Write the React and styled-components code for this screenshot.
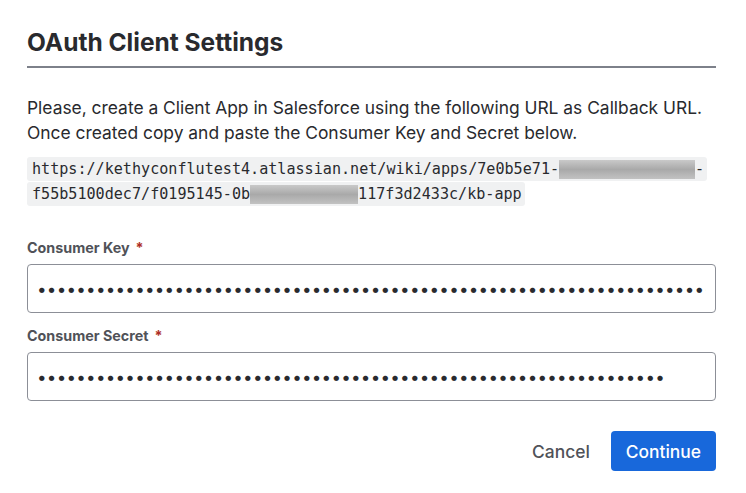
import styled, { createGlobalStyle } from "styled-components";

const GlobalStyle = createGlobalStyle`
  html, body {
    margin: 0;
    background: #ffffff;
  }
  body {
    font-family: Inter, "Noto Sans", sans-serif;
    color: #292a2e;
  }
`;

const Modal = styled.section`
  width: 689px;
  padding: 26px 30px 22px 27px;
  display: flex;
  flex-direction: column;
`;

const Title = styled.h1`
  margin: 0;
  padding-bottom: 8px;
  font-size: 24.5px;
  line-height: 32px;
  font-weight: 700;
  color: #292a2e;
  border-bottom: 2px solid #7d818a;
`;

const Body = styled.div`
  padding-top: 27px;
  display: flex;
  flex-direction: column;
`;

const Intro = styled.p`
  margin: 0;
  font-size: 17.4px;
  line-height: 25px;
  color: #292a2e;
`;

const CodeBlock = styled.div`
  margin-top: 12px;
  display: flex;
  flex-direction: column;
  align-items: flex-start;
  gap: 1px;
`;

const CodeLine = styled.code`
  display: flex;
  align-items: center;
  height: 24px;
  padding: 0 3px 0 5px;
  background: #f0f1f2;
  border-radius: 3px;
  font-family: "DejaVu Sans Mono", "Liberation Mono", monospace;
  font-size: 15.1px;
  color: #292a2e;
  white-space: pre;
`;

const Redacted = styled.span`
  display: inline-block;
  width: ${({ $w }) => $w}px;
  height: 19px;
  background: linear-gradient(180deg, #c9c9c9 0%, #a9a9a9 50%, #c2c2c2 100%);
`;

const Field = styled.div`
  display: flex;
  flex-direction: column;
  margin-top: ${({ $top }) => $top}px;
`;

const Label = styled.label`
  font-size: 14.3px;
  line-height: 20px;
  font-weight: 650;
  color: #505258;
  margin-bottom: 6px;
`;

const Required = styled.span`
  color: #ae2e24;
  margin-left: 6px;
`;

const Input = styled.input`
  box-sizing: border-box;
  width: 100%;
  height: 49px;
  padding: 0 9px;
  border: 1px solid #8c8f97;
  border-radius: 4px;
  background: #ffffff;
  font-family: Inter, sans-serif;
  font-size: 17px;
  letter-spacing: 0.25px;
  color: #292a2e;
  outline: none;
`;

const Actions = styled.div`
  margin-top: 30px;
  display: flex;
  justify-content: flex-end;
  align-items: center;
  gap: 6px;
`;

const Button = styled.button`
  height: 40px;
  padding: 0 15px;
  border: none;
  border-radius: 4px;
  font-family: Inter, sans-serif;
  font-size: 17.4px;
  font-weight: 500;
  background: ${({ $primary }) => ($primary ? "#1868db" : "transparent")};
  color: ${({ $primary }) => ($primary ? "#ffffff" : "#505258")};
  cursor: pointer;
`;

const keyValue = "x".repeat(90);
const secretValue = "x".repeat(64);

export default function App() {
  return (
    <>
      <GlobalStyle />
      <Modal>
        <Title>OAuth Client Settings</Title>
        <Body>
          <Intro>
            Please, create a Client App in Salesforce using the following URL as Callback URL.
            <br />
            Once created copy and paste the Consumer Key and Secret below.
          </Intro>
          <CodeBlock>
            <CodeLine>
              https://kethyconflutest4.atlassian.net/wiki/apps/7e0b5e71-
              <Redacted $w={136} />-
            </CodeLine>
            <CodeLine>
              f55b5100dec7/f0195145-0b
              <Redacted $w={108} />
              117f3d2433c/kb-app
            </CodeLine>
          </CodeBlock>
          <Field $top={32}>
            <Label htmlFor="consumer-key">
              Consumer Key<Required>*</Required>
            </Label>
            <Input id="consumer-key" type="password" defaultValue={keyValue} />
          </Field>
          <Field $top={13}>
            <Label htmlFor="consumer-secret">
              Consumer Secret<Required>*</Required>
            </Label>
            <Input id="consumer-secret" type="password" defaultValue={secretValue} />
          </Field>
        </Body>
        <Actions>
          <Button>Cancel</Button>
          <Button $primary>Continue</Button>
        </Actions>
      </Modal>
    </>
  );
}
